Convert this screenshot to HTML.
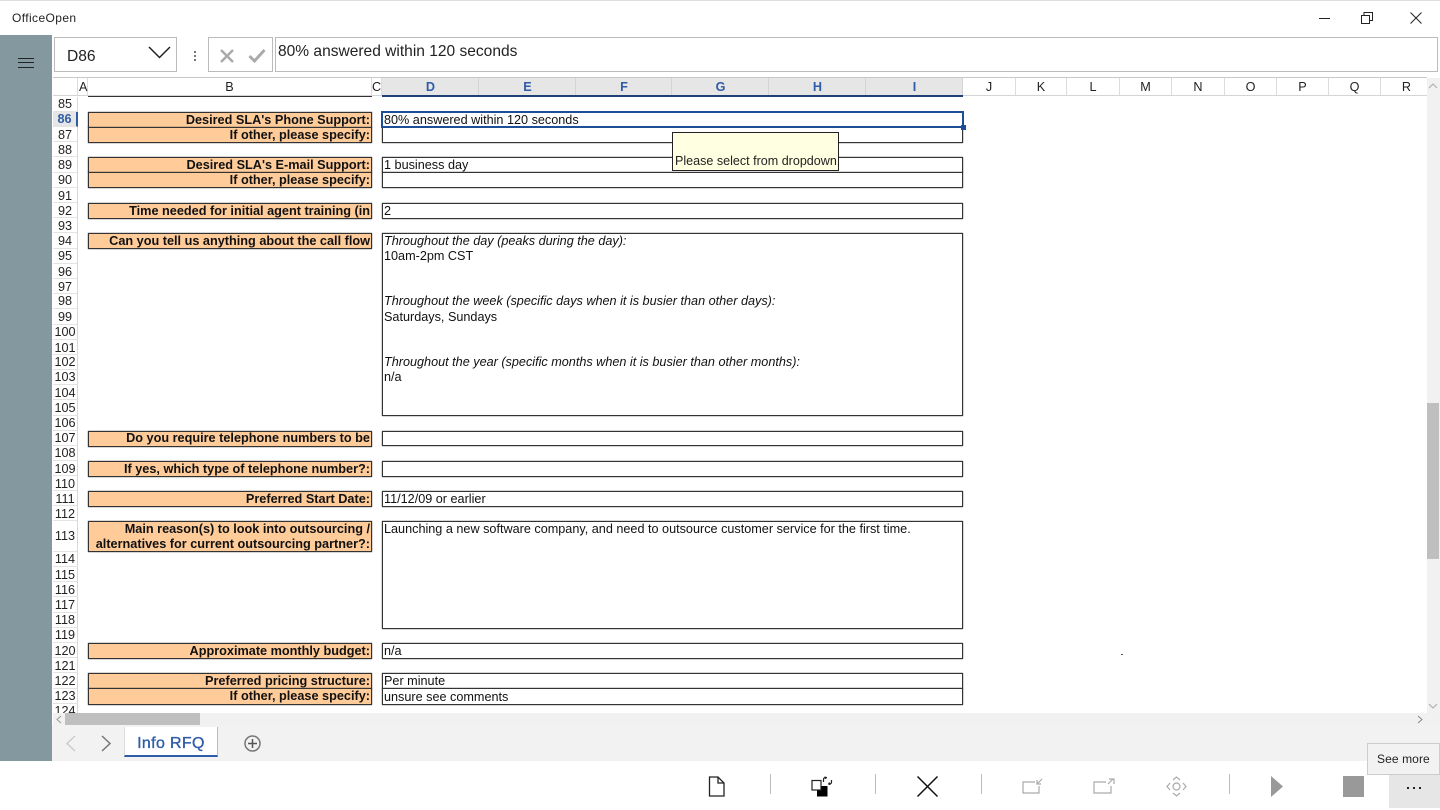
<!DOCTYPE html>
<html><head><meta charset="utf-8"><style>
html,body{margin:0;padding:0;width:1440px;height:810px;overflow:hidden;background:#fff;font-family:"Liberation Sans",sans-serif;color:#111}
#p{position:absolute;left:0;top:0;width:1440px;height:810px;overflow:hidden;background:#fff;filter:blur(.3px)}
div,span{position:absolute;box-sizing:border-box;white-space:nowrap}
svg{position:absolute;overflow:visible}
.r{left:53px;width:25px;border-bottom:1px solid #e3e3e3;border-right:1px solid #d8d8d8;text-align:center;font-size:12.65px;color:#222}
.c{top:78px;height:18px;line-height:18px;text-align:center;font-size:12.65px;border-right:1px solid #dcdcdc;border-bottom:1px solid #d4d4d4;color:#222}
.s{background:#e6e6e6;color:#2f5ca8;font-weight:bold;border-right:1px solid #d4d4d4;border-bottom:0;padding-left:1px}
.o{left:88px;width:284px;background:#fc9;border:1px solid #333;box-shadow:0 0 1px #333;text-align:right;font-weight:bold;font-size:12.7px;padding-right:1px;color:#111}
.w{left:382px;width:581px;background:#fff;border:1px solid #333;box-shadow:0 0 1px #333;font-size:12.65px;padding-left:1px;color:#111}
.t{font-size:12.65px;left:384px;color:#111}
.i{font-style:italic}
</style></head><body><div id="p">
<div style="left:0;top:0;width:1440px;height:1px;background:#ddd"></div>
<div style="left:12px;top:10px;font-size:12px;line-height:16px;color:#222;letter-spacing:.4px">OfficeOpen</div>
<div style="left:1319px;top:18px;width:11px;height:1px;background:#222"></div>
<svg style="left:1361px;top:12px" width="13" height="12" fill="none" stroke="#222"><path d="M.5 3.500h8v8h-8zM3 3V.5h8.500v8H9"/></svg>
<svg style="left:1410px;top:12px" width="12" height="12" fill="none" stroke="#222"><path d="M.5.500l11 11M11.500.500l-11 11"/></svg>

<div style="left:0;top:35px;width:52px;height:726px;background:#84999f"></div>
<div style="left:18px;top:58px;width:16px;height:1px;background:#222"></div>
<div style="left:18px;top:62px;width:16px;height:1px;background:#222"></div>
<div style="left:18px;top:67px;width:16px;height:1px;background:#222"></div>

<div style="left:54px;top:37px;width:123px;height:35px;border:1px solid #bbb;font-size:15.600px;line-height:37px;padding-left:12px;color:#222">D86</div>
<svg style="left:148px;top:46px" width="23" height="13" fill="none" stroke="#222" stroke-width="1.500"><path d="M1 1l10.500 10.500L22 1"/></svg>
<div style="left:194px;top:51px;width:2px;height:2px;background:#777"></div>
<div style="left:194px;top:55px;width:2px;height:2px;background:#777"></div>
<div style="left:194px;top:59px;width:2px;height:2px;background:#777"></div>
<div style="left:208px;top:37px;width:65px;height:35px;border:1px solid #bbb"></div>
<svg style="left:220px;top:49px" width="14" height="14" fill="none" stroke="#aaa" stroke-width="2.500"><path d="M1 1l12 12M13 1L1 13"/></svg>
<svg style="left:248px;top:48px" width="18" height="15" fill="none" stroke="#aaa" stroke-width="3"><path d="M1.500 8l5 5L16.500 2"/></svg>
<div style="left:275px;top:37px;width:1163px;height:35px;border:1px solid #bbb;font-size:15.550px;line-height:27px;padding-left:2px;color:#222">80% answered within 120 seconds</div>

<div style="left:53px;top:77px;width:1374px;height:1px;background:#c8c8c8"></div>
<div class="c" style="left:53px;width:25px"></div>
<div class="c" style="left:78px;width:10px;overflow:visible;padding-left:1px">A</div>
<div class="c" style="left:88px;width:284px">B</div>
<div class="c" style="left:372px;width:10px">C</div>
<div class="c s" style="left:382px;width:97px">D</div>
<div class="c s" style="left:479px;width:97px">E</div>
<div class="c s" style="left:576px;width:96px">F</div>
<div class="c s" style="left:672px;width:97px">G</div>
<div class="c s" style="left:769px;width:97px">H</div>
<div class="c s" style="left:866px;width:97px">I</div>
<div class="c" style="left:963px;width:53px">J</div>
<div class="c" style="left:1016px;width:51px">K</div>
<div class="c" style="left:1067px;width:53px">L</div>
<div class="c" style="left:1120px;width:52px">M</div>
<div class="c" style="left:1172px;width:53px">N</div>
<div class="c" style="left:1225px;width:52px">O</div>
<div class="c" style="left:1277px;width:52px">P</div>
<div class="c" style="left:1329px;width:52px">Q</div>
<div class="c" style="left:1381px;width:46px;border-right:0;padding-left:5px;overflow:visible">R</div>
<div style="left:88px;top:96px;width:284px;height:1px;background:#333"></div>
<div style="left:382px;top:95px;width:581px;height:2px;background:#1f3f78"></div>

<div class="r" style="top:97px;height:15px;line-height:15px">85</div>
<div class="r" style="top:112px;height:15px;line-height:15px;background:#e6e6e6;color:#2f5ca8;font-weight:bold;border-right:2px solid #2f5ca8">86</div>
<div class="r" style="top:127px;height:15px;line-height:16px">87</div>
<div class="r" style="top:142px;height:15px;line-height:16px">88</div>
<div class="r" style="top:157px;height:16px;line-height:16px">89</div>
<div class="r" style="top:173px;height:15px;line-height:15px">90</div>
<div class="r" style="top:188px;height:15px;line-height:16px">91</div>
<div class="r" style="top:203px;height:15px;line-height:16px">92</div>
<div class="r" style="top:218px;height:15px;line-height:16px">93</div>
<div class="r" style="top:233px;height:16px;line-height:16px">94</div>
<div class="r" style="top:249px;height:15px;line-height:15px">95</div>
<div class="r" style="top:264px;height:15px;line-height:16px">96</div>
<div class="r" style="top:279px;height:15px;line-height:16px">97</div>
<div class="r" style="top:294px;height:15px;line-height:15px">98</div>
<div class="r" style="top:309px;height:16px;line-height:16px">99</div>
<div class="r" style="top:325px;height:15px;line-height:15px">100</div>
<div class="r" style="top:340px;height:15px;line-height:16px">101</div>
<div class="r" style="top:355px;height:15px;line-height:15px">102</div>
<div class="r" style="top:370px;height:15px;line-height:15px">103</div>
<div class="r" style="top:385px;height:15px;line-height:16px">104</div>
<div class="r" style="top:400px;height:16px;line-height:16px">105</div>
<div class="r" style="top:416px;height:15px;line-height:15px">106</div>
<div class="r" style="top:431px;height:15px;line-height:15px">107</div>
<div class="r" style="top:446px;height:15px;line-height:15px">108</div>
<div class="r" style="top:461px;height:15px;line-height:16px">109</div>
<div class="r" style="top:476px;height:15px;line-height:16px">110</div>
<div class="r" style="top:491px;height:15px;line-height:16px">111</div>
<div class="r" style="top:506px;height:15px;line-height:16px">112</div>
<div class="r" style="top:521px;height:31px;line-height:30px">113</div>
<div class="r" style="top:552px;height:15px;line-height:15px">114</div>
<div class="r" style="top:567px;height:15px;line-height:16px">115</div>
<div class="r" style="top:582px;height:15px;line-height:16px">116</div>
<div class="r" style="top:597px;height:16px;line-height:16px">117</div>
<div class="r" style="top:613px;height:15px;line-height:15px">118</div>
<div class="r" style="top:628px;height:15px;line-height:15px">119</div>
<div class="r" style="top:643px;height:15px;line-height:16px">120</div>
<div class="r" style="top:658px;height:15px;line-height:16px">121</div>
<div class="r" style="top:673px;height:16px;line-height:16px">122</div>
<div class="r" style="top:689px;height:15px;line-height:15px">123</div>
<div class="r" style="top:704px;height:9px;line-height:14px;overflow:hidden;border-bottom:0">124</div>

<div class="o" style="top:112px;height:16px;line-height:14px">Desired SLA's Phone Support:</div>
<div class="o" style="top:127px;height:16px;line-height:14px">If other, please specify:</div>
<div class="o" style="top:157px;height:16px;line-height:14px">Desired SLA's E-mail Support:</div>
<div class="o" style="top:172px;height:16px;line-height:15px">If other, please specify:</div>
<div class="o" style="top:203px;height:16px;line-height:14px">Time needed for initial agent training (in</div>
<div class="o" style="top:233px;height:16px;line-height:14px">Can you tell us anything about the call flow</div>
<div class="o" style="top:431px;height:16px;line-height:13px">Do you require telephone numbers to be</div>
<div class="o" style="top:461px;height:16px;line-height:14px">If yes, which type of telephone number?:</div>
<div class="o" style="top:491px;height:16px;line-height:14px">Preferred Start Date:</div>
<div class="o" style="top:521px;height:31px;line-height:15.200px">Main reason(s) to look into outsourcing /<br>alternatives for current outsourcing partner?:</div>
<div class="o" style="top:643px;height:16px;line-height:14px">Approximate monthly budget:</div>
<div class="o" style="top:673px;height:16px;line-height:14px">Preferred pricing structure:</div>
<div class="o" style="top:688px;height:17px;line-height:15px">If other, please specify:</div>

<div class="w" style="top:127px;height:16px"></div>
<div class="w" style="top:157px;height:16px;line-height:15px">1 business day</div>
<div class="w" style="top:172px;height:16px"></div>
<div class="w" style="top:203px;height:16px;line-height:14px">2</div>
<div class="w" style="top:233px;height:183px"></div>
<div class="t i" style="top:234px;line-height:15px">Throughout the day (peaks during the day):</div>
<div class="t" style="top:249px;line-height:15px">10am-2pm CST</div>
<div class="t i" style="top:294px;line-height:15px">Throughout the week (specific days when it is busier than other days):</div>
<div class="t" style="top:310px;line-height:15px">Saturdays, Sundays</div>
<div class="t i" style="top:355px;line-height:15px">Throughout the year (specific months when it is busier than other months):</div>
<div class="t" style="top:370px;line-height:15px">n/a</div>
<div class="w" style="top:431px;height:15px"></div>
<div class="w" style="top:461px;height:16px"></div>
<div class="w" style="top:491px;height:16px;line-height:14px">11/12/09 or earlier</div>
<div class="w" style="top:521px;height:108px"></div>
<div class="t" style="top:522px;line-height:15px">Launching a new software company, and need to outsource customer service for the first time.</div>
<div class="w" style="top:643px;height:16px;line-height:14px">n/a</div>
<div class="w" style="top:673px;height:16px;line-height:14px">Per minute</div>
<div class="w" style="top:688px;height:17px;line-height:16px">unsure see comments</div>

<div style="left:381px;top:111px;width:583px;height:17px;border:2px solid #1f4e99;font-size:12.65px;line-height:14px;padding-left:1px;background:#fff">80% answered within 120 seconds</div>
<div style="left:961px;top:125px;width:5px;height:5px;background:#1f4e99"></div>
<div style="left:672px;top:132px;width:167px;height:39px;background:#ffffe1;border:1px solid #222;font-size:12.55px;line-height:16px;padding:20px 0 0 2px;color:#222">Please select from dropdown</div>
<div style="left:1121px;top:654px;width:2px;height:1px;background:#555"></div>

<div style="left:1427px;top:78px;width:13px;height:647px;background:#f1f1f1"></div>
<div style="left:1427px;top:403px;width:12px;height:156px;background:#bfbfbf"></div>
<svg style="left:1428px;top:83px" width="10" height="6" fill="none" stroke="#aaa"><path d="M1 5l4-4 4 4"/></svg>
<svg style="left:1428px;top:703px" width="10" height="6" fill="none" stroke="#aaa"><path d="M1 1l4 4 4-4"/></svg>
<div style="left:53px;top:713px;width:1374px;height:12px;background:#f1f1f1"></div>
<div style="left:65px;top:713px;width:135px;height:12px;background:#bfbfbf"></div>
<svg style="left:56px;top:715px" width="6" height="9" fill="none" stroke="#999"><path d="M5 1L1 4.500 5 8"/></svg>
<svg style="left:1417px;top:715px" width="6" height="9" fill="none" stroke="#888"><path d="M1 1l4 3.500L1 8"/></svg>

<div style="left:52px;top:725px;width:1388px;height:36px;background:#f2f2f2"></div>
<svg style="left:65px;top:735px" width="12" height="17" fill="none" stroke="#ccc" stroke-width="1.500"><path d="M10 1L2 8.500l8 7.500"/></svg>
<svg style="left:100px;top:735px" width="12" height="17" fill="none" stroke="#777" stroke-width="1.500"><path d="M2 1l8 7.500L2 16"/></svg>
<div style="left:124px;top:727px;width:94px;height:30px;background:#fff;border-right:1px solid #bbb;border-left:1px solid #ddd;border-bottom:2px solid #2f5ca8;color:#2f5ca8;font-size:16px;line-height:33px;text-align:center;letter-spacing:.35px;-webkit-text-stroke:.35px #2f5ca8">Info RFQ</div>
<svg style="left:244px;top:735px" width="17" height="17" fill="none" stroke="#777" stroke-width="1.500"><circle cx="8.500" cy="8.500" r="7.500"/><path d="M8.500 4v9M4 8.500h9" stroke="#555"/></svg>

<svg style="left:708px;top:776px" width="17" height="21" fill="none" stroke="#222" stroke-width="1.300"><path d="M1.500 1h8.500l6 6v13H1.500zM10 1v6h6"/></svg>
<div style="left:770px;top:774px;width:1px;height:20px;background:#bbb"></div>
<svg style="left:811px;top:776px" width="22" height="21"><rect x="6" y="10" width="10.500" height="10.500" fill="#000"/><rect x="1" y="4.500" width="9" height="9.500" fill="#fff" stroke="#222" stroke-width="1.200"/><path d="M12.500 6V3.500Q12.500 1.500 15 1.500M13.500 1l1.800.5-.8 1.500M20.500 4v2Q20.500 8 18 8M19.500 8.500l-1.800-.5.8-1.500" fill="none" stroke="#222" stroke-width="1.200"/></svg>
<div style="left:875px;top:774px;width:1px;height:20px;background:#bbb"></div>
<svg style="left:917px;top:776px" width="21" height="21" fill="none" stroke="#111" stroke-width="1.500"><path d="M.5.500l20 20M20.500.500l-20 20"/></svg>
<div style="left:981px;top:774px;width:1px;height:20px;background:#bbb"></div>
<svg style="left:1022px;top:778px" width="21" height="17" fill="none" stroke="#aaa" stroke-width="1.200"><path d="M13 4H1v11h16V8M20 1l-5 5M15 2v4h4"/></svg>
<svg style="left:1093px;top:778px" width="22" height="17" fill="none" stroke="#aaa" stroke-width="1.200"><path d="M13 4H1v11h17V8M15 6l5-5M16 1h5v5"/></svg>
<svg style="left:1166px;top:776px" width="22" height="22" fill="none" stroke="#aaa" stroke-width="1.200"><circle cx="10.500" cy="10.500" r="3.500"/><path d="M7 4l3.500-3 3.500 3M7 17l3.500 3 3.500-3M4 7l-3 3.500 3 3.500M17 7l3 3.500-3 3.500"/></svg>
<div style="left:1229px;top:774px;width:1px;height:20px;background:#bbb"></div>
<svg style="left:1271px;top:776px" width="12" height="21"><path d="M0 0l12 10.500L0 21z" fill="#999"/></svg>
<div style="left:1343px;top:776px;width:21px;height:21px;background:#999"></div>
<div style="left:1389px;top:761px;width:51px;height:47px;background:#e6e6e6"></div>
<div style="left:1407px;top:787px;width:2px;height:2px;background:#222"></div>
<div style="left:1413px;top:787px;width:2px;height:2px;background:#222"></div>
<div style="left:1419px;top:787px;width:2px;height:2px;background:#222"></div>
<div style="left:1367px;top:743px;width:73px;height:32px;background:#f2f2f2;border:1px solid #ccc;font-size:12px;line-height:30px;padding-left:9px;color:#222;letter-spacing:.1px">See more</div>
</div></body></html>
